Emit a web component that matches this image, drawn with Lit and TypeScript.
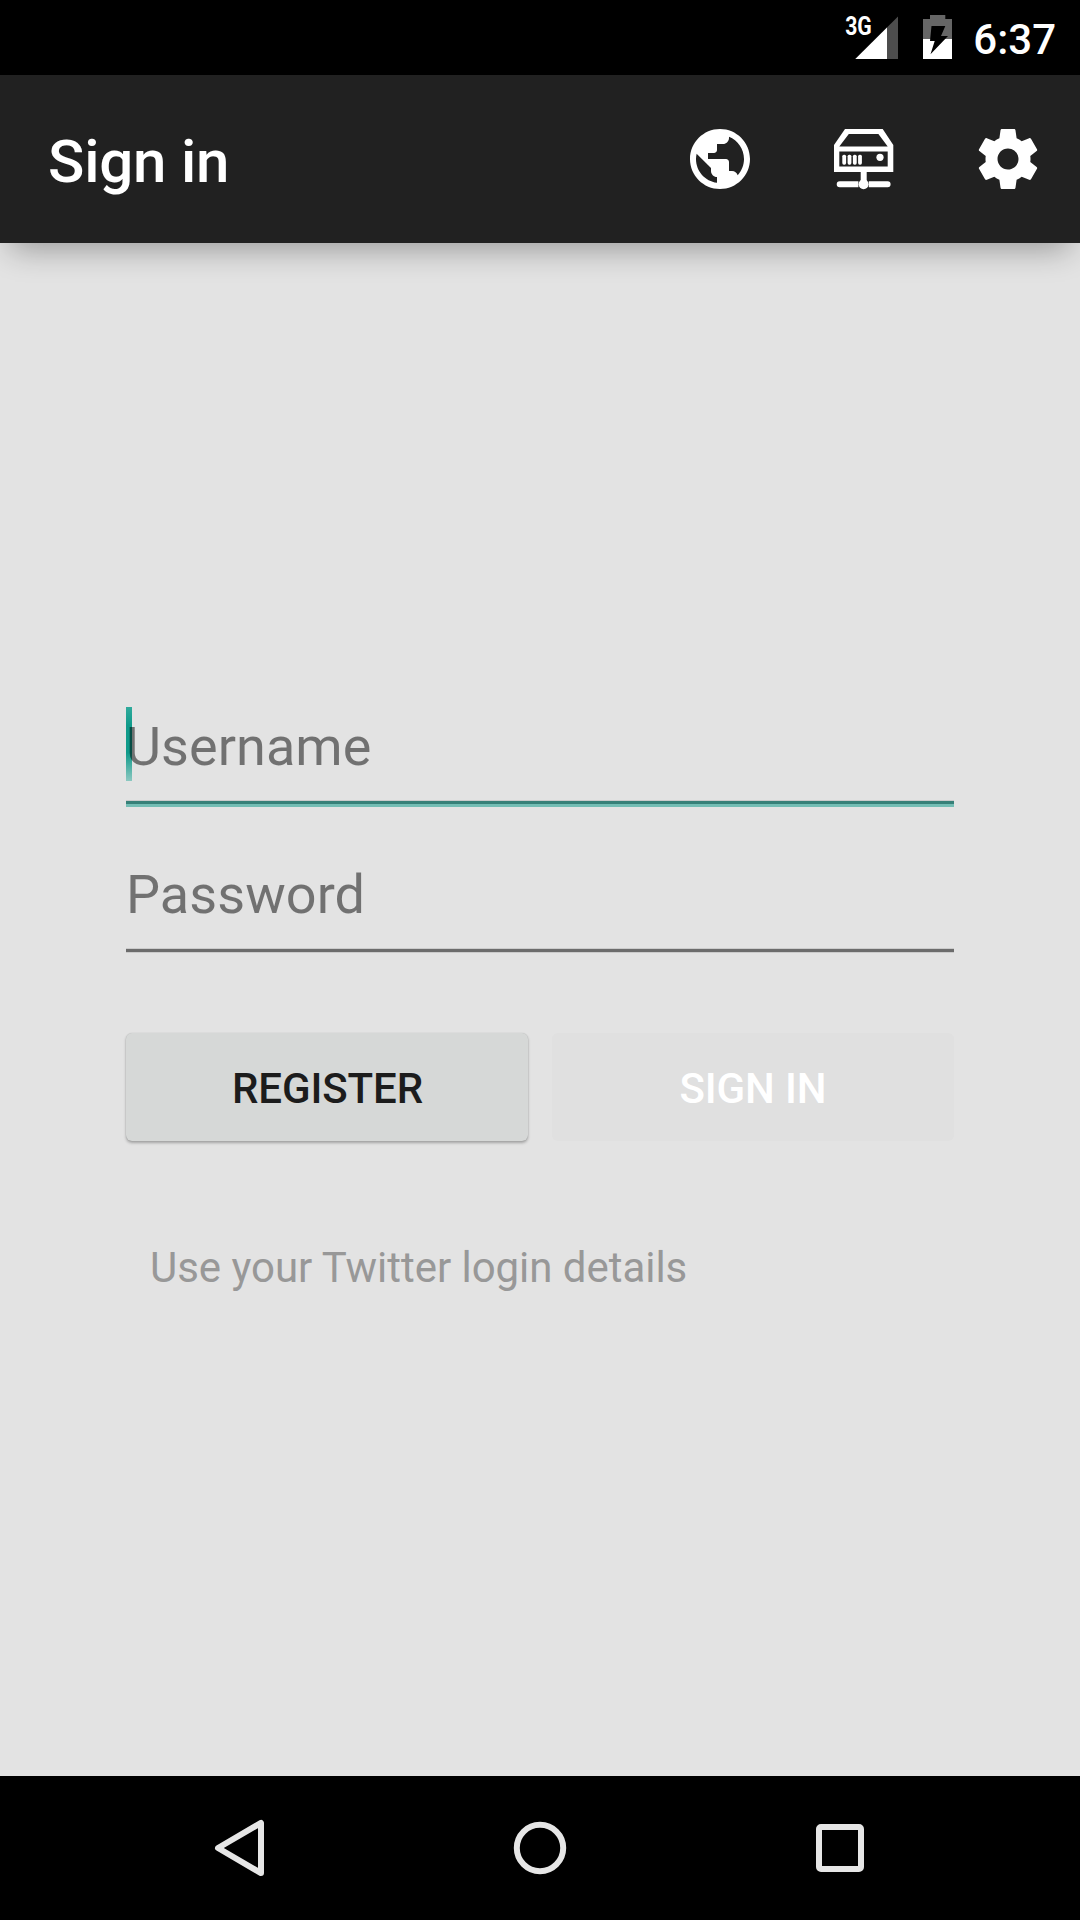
import { LitElement, html, css } from "lit";
import { customElement } from "lit/decorators.js";

@customElement("status-bar")
class StatusBar extends LitElement {
  static styles = css`
    :host {
      display: flex;
      justify-content: flex-end;
      align-items: center;
      height: 75px;
      padding-right: 24px;
      background: #000;
      color: #fff;
    }
    .indicators {
      display: block;
      width: 112px;
      height: 75px;
    }
    .network {
      font: 700 25px Roboto, sans-serif;
      fill: #fff;
    }
    .time {
      margin-left: 17px;
      padding-top: 3px;
      font: 500 42px/49px Roboto, sans-serif;
    }
  `;
  render() {
    return html`
      <svg class="indicators" viewBox="844 0 112 75">
        <path d="M898 16.5V59H855.3Z" fill="#4d4d4d" />
        <path d="M887 27.5V59H855.3Z" fill="#fff" />
        <text class="network" x="845.2" y="35.4" textLength="26.6" lengthAdjust="spacingAndGlyphs">3G</text>
        <path d="M923 39V19H930V15H945.3V19H952V39Z" fill="#666" />
        <path d="M923 39H952V59H923Z" fill="#fff" />
        <path d="M931.5 26H945.3L941 36H948L930.5 54.3L934.7 41H930Z" fill="#000" />
      </svg>
      <span class="time">6:37</span>
    `;
  }
}

@customElement("action-bar")
class ActionBar extends LitElement {
  static styles = css`
    :host {
      display: flex;
      align-items: center;
      justify-content: space-between;
      height: 168px;
      padding-left: 48px;
      background: #212121;
      color: #fff;
      box-shadow: 0 16px 30px -10px rgba(0, 0, 0, 0.33);
    }
    .title {
      margin: 0;
      padding-top: 5px;
      font: 500 60px/70px Roboto, sans-serif;
      letter-spacing: -0.2px;
    }
    .actions {
      display: flex;
    }
    .action {
      display: flex;
      align-items: center;
      justify-content: center;
      width: 144px;
      height: 168px;
      padding: 0;
      border: 0;
      background: none;
      color: inherit;
    }
    .icon {
      display: block;
      width: 72px;
      height: 72px;
      fill: currentColor;
    }
  `;
  render() {
    return html`
      <h1 class="title">Sign in</h1>
      <div class="actions">
        <button class="action">
          <svg class="icon" viewBox="0 0 24 24">
            <path d="M12 2C6.48 2 2 6.48 2 12s4.48 10 10 10 10-4.48 10-10S17.52 2 12 2zm-1 17.93c-3.95-.49-7-3.85-7-7.93 0-.62.08-1.21.21-1.79L9 15v1c0 1.1.9 2 2 2v1.93zm6.9-2.54c-.26-.81-1-1.39-1.9-1.39h-1v-3c0-.55-.45-1-1-1H8v-2h2c.55 0 1-.45 1-1V7h2c1.1 0 2-.9 2-2v-.41c2.93 1.19 5 4.06 5 7.41 0 2.08-.8 3.97-2.1 5.39z" />
          </svg>
        </button>
        <button class="action">
          <svg class="icon" viewBox="0 0 72 72">
            <path fill-rule="evenodd" d="M17 6H54.7L65.3 22V49H6V22ZM20.8 11L11.3 23.4H59.7L50.4 11ZM11.3 28.5V43.5H59.7V28.5Z" />
            <rect x="14.3" y="31.7" width="3.8" height="10" rx="1.6" />
            <rect x="19.6" y="31.7" width="3.8" height="10" rx="1.6" />
            <rect x="24.9" y="31.7" width="3.8" height="10" rx="1.6" />
            <rect x="30.1" y="31.7" width="3.8" height="10" rx="1.6" />
            <circle cx="52" cy="34.3" r="3.6" />
            <path d="M32.7 48H38.7V58H32.7Z" />
            <circle cx="35.6" cy="61.3" r="5" />
            <path d="M30.4 58.3V64.3H11.7a3 3 0 0 1 0-6ZM40.8 58.3V64.3H59.6a3 3 0 0 0 0-6Z" />
          </svg>
        </button>
        <button class="action">
          <svg class="icon" viewBox="0 0 24 24">
            <path d="M19.43 12.98c.04-.32.07-.64.07-.98s-.03-.66-.07-.98l2.11-1.65c.19-.15.24-.42.12-.64l-2-3.46c-.12-.22-.39-.3-.61-.22l-2.49 1c-.52-.4-1.08-.73-1.69-.98l-.38-2.65C14.46 2.18 14.25 2 14 2h-4c-.25 0-.46.18-.49.42l-.38 2.65c-.61.25-1.17.59-1.69.98l-2.49-1c-.23-.09-.49 0-.61.22l-2 3.46c-.13.22-.07.49.12.64l2.11 1.65c-.04.32-.07.65-.07.98s.03.66.07.98l-2.11 1.65c-.19.15-.24.42-.12.64l2 3.46c.12.22.39.3.61.22l2.49-1c.52.4 1.08.73 1.69.98l.38 2.65c.03.24.24.42.49.42h4c.25 0 .46-.18.49-.42l.38-2.65c.61-.25 1.17-.59 1.69-.98l2.49 1c.23.09.49 0 .61-.22l2-3.46c.12-.22.07-.49-.12-.64l-2.11-1.65zM12 15.5c-1.93 0-3.5-1.57-3.5-3.5s1.57-3.5 3.5-3.5 3.5 1.57 3.5 3.5-1.57 3.5-3.5 3.5z" />
          </svg>
        </button>
      </div>
    `;
  }
}

@customElement("login-form")
class LoginForm extends LitElement {
  static styles = css`
    :host {
      display: flex;
      flex-direction: column;
      padding: 464px 126px 0;
      font-family: Roboto, sans-serif;
    }
    .field {
      position: relative;
      display: flex;
      flex-direction: column;
      height: 148px;
    }
    .input {
      position: relative;
      z-index: 1;
      box-sizing: border-box;
      width: 100%;
      height: 76px;
      padding: 2px 0 0;
      border: 0;
      outline: 0;
      background: none;
      font: 400 54px/74px Roboto, sans-serif;
      letter-spacing: 0.06px;
      color: #212121;
    }
    .input::placeholder {
      color: rgba(0, 0, 0, 0.5);
      opacity: 1;
    }
    .caret {
      position: absolute;
      left: 0;
      top: 0;
      width: 5.5px;
      height: 74px;
      background: linear-gradient(#30aa9c 0, #0f9a8a 25%, #0f9a8a 62%, #8cc8c1 100%);
    }
    .line {
      height: 3px;
      margin-top: 17px;
      border-top: 1px solid #cbcbcb;
      border-bottom: 1px solid #cbcbcb;
      background: #6c6c6c;
    }
    .line-focused {
      height: 3px;
      background: #378078;
      border-bottom: 3px solid #73bdb4;
    }
    .buttons {
      display: grid;
      grid-template-columns: 1fr 1fr;
      gap: 24px;
      margin-top: 30px;
    }
    .button {
      height: 108px;
      padding: 2px 0 0;
      border: 0;
      border-radius: 6px;
      font: 500 42px/49px Roboto, sans-serif;
      letter-spacing: -0.1px;
    }
    .register {
      padding-left: 1px;
      background: #d6d8d7;
      color: #1c1c1c;
      box-shadow: 0 2px 3px rgba(0, 0, 0, 0.28), 0 0 1px rgba(0, 0, 0, 0.2);
    }
    .submit {
      background: #e0e0e0;
      color: #fff;
    }
    .hint {
      margin: 102px 0 0;
      padding-left: 24px;
      font-size: 42px;
      line-height: 49px;
      letter-spacing: -0.04px;
      color: #989898;
    }
  `;
  render() {
    return html`
      <div class="field">
        <span class="caret"></span>
        <input class="input" type="text" placeholder="Username" />
        <div class="line line-focused"></div>
      </div>
      <div class="field">
        <input class="input" type="password" placeholder="Password" />
        <div class="line"></div>
      </div>
      <div class="buttons">
        <button class="button register">REGISTER</button>
        <button class="button submit">SIGN IN</button>
      </div>
      <p class="hint">Use your Twitter login details</p>
    `;
  }
}

@customElement("nav-bar")
class NavBar extends LitElement {
  static styles = css`
    :host {
      display: flex;
      justify-content: center;
      align-items: center;
      height: 144px;
      background: #000;
    }
    .key {
      display: flex;
      align-items: center;
      justify-content: center;
      width: 300px;
      height: 144px;
      padding: 0;
      border: 0;
      background: none;
    }
    .glyph {
      display: block;
      width: 72px;
      height: 72px;
      fill: none;
      stroke: #e6e6e6;
      stroke-width: 6;
      stroke-linejoin: round;
    }
  `;
  render() {
    return html`
      <button class="key">
        <svg class="glyph" viewBox="0 0 72 72"><path d="M14 36L57 10.9V61.1Z" /></svg>
      </button>
      <button class="key">
        <svg class="glyph" viewBox="0 0 72 72"><circle cx="36" cy="36" r="23.2" /></svg>
      </button>
      <button class="key">
        <svg class="glyph" viewBox="0 0 72 72"><rect x="15" y="15" width="42" height="42" rx="2" /></svg>
      </button>
    `;
  }
}

@customElement("app-root")
class AppRoot extends LitElement {
  static styles = css`
    :host {
      display: flex;
      flex-direction: column;
      width: 1080px;
      height: 1920px;
      overflow: hidden;
      background: #e3e3e3;
    }
    .content {
      flex: 1;
    }
  `;
  render() {
    return html`
      <status-bar></status-bar>
      <action-bar></action-bar>
      <login-form class="content"></login-form>
      <nav-bar></nav-bar>
    `;
  }
}
